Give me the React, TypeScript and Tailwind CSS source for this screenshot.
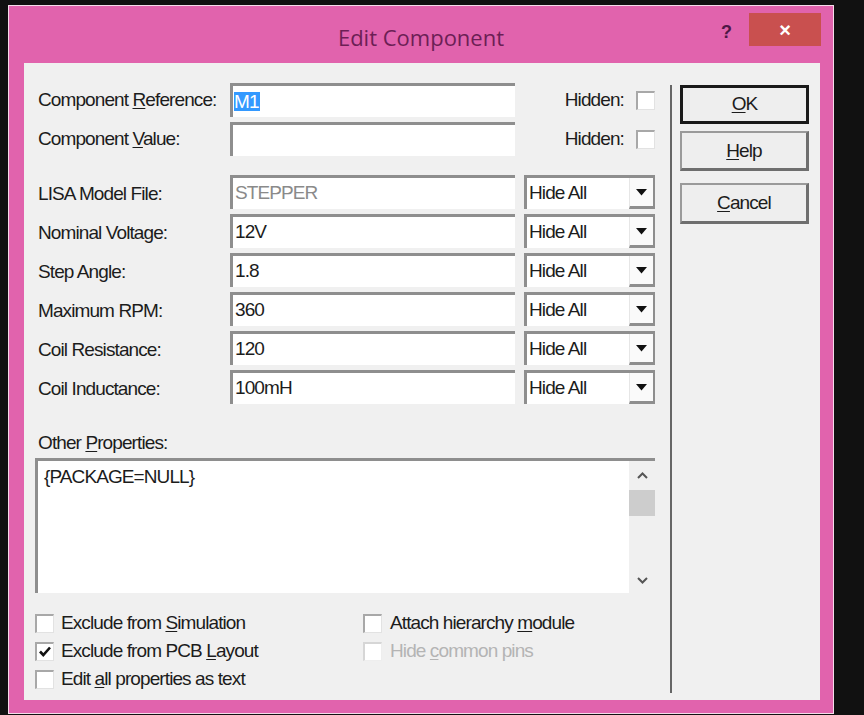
import React from "react";

const ui = "font-['Liberation_Sans',Arial,sans-serif] text-[19px] tracking-[-0.9px] text-[#1c1c1c]";

// sunken white field used for inputs
function Field({ value, gray, selected }: { value?: string; gray?: boolean; selected?: boolean }) {
  return (
    <div className="w-[285px] h-[34px] shrink-0 flex items-center bg-white border-t-[3px] border-l-[3px] border-[#8e8e8e]">
      {selected ? (
        <span className="ml-[1px] bg-[#3399ff] text-white leading-[19px] pr-[1px]">{value}</span>
      ) : (
        <span className={"ml-[2px] " + (gray ? "text-[#8a8a8a]" : "")}>{value}</span>
      )}
    </div>
  );
}

function Dropdown() {
  return (
    <div className="ml-[9px] w-[131px] h-[34px] flex bg-white border-t-[3px] border-l-[3px] border-[#8e8e8e]">
      <span className="flex-1 flex items-center pl-[2px]">Hide All</span>
      <div className="w-[26px] flex items-center justify-center bg-[#fafafa] border-l border-[#e6e6e6] border-r-[2px] border-r-[#8e8e8e] border-b-[3px] border-b-[#8e8e8e]">
        <svg width="11" height="7" viewBox="0 0 11 7">
          <path d="M0 0 H11 L5.5 6.5 Z" fill="#111" />
        </svg>
      </div>
    </div>
  );
}

function Check({ checked, disabled }: { checked?: boolean; disabled?: boolean }) {
  return (
    <div
      className={
        "w-[19px] h-[19px] shrink-0 flex items-center justify-center bg-white border-t-[2px] border-l-[2px] border-r border-b " +
        (disabled
          ? "border-t-[#d6d6d6] border-l-[#d6d6d6] border-r-[#eeeeee] border-b-[#eeeeee] bg-[#f6f6f6]"
          : "border-t-[#a8a8a8] border-l-[#a8a8a8] border-r-[#e2e2e2] border-b-[#e2e2e2]")
      }
    >
      {checked && (
        <svg width="12" height="11" viewBox="0 0 12 11">
          <path d="M1 5.5 L4.3 9 L11 1.5" stroke="#111" strokeWidth="2.6" fill="none" />
        </svg>
      )}
    </div>
  );
}

const rows = [
  ["LISA Model File:", "STEPPER"],
  ["Nominal Voltage:", "12V"],
  ["Step Angle:", "1.8"],
  ["Maximum RPM:", "360"],
  ["Coil Resistance:", "120"],
  ["Coil Inductance:", "100mH"],
];

export default function App() {
  return (
    <div className={"w-[864px] h-[715px] bg-[#111111] pt-[5px] pl-[8px] overflow-hidden " + ui}>
      <div className="w-[826px] h-[709px] border border-[#f6dcea] bg-[#e163ad] flex flex-col">
        {/* title bar */}
        <div className="h-[57px] shrink-0 grid grid-cols-[1fr_auto_1fr]">
          <div />
          <div className="pt-[16px] font-['Open_Sans',sans-serif] text-[22px] tracking-normal text-[#6c1f55] leading-[30px]">
            Edit Component
          </div>
          <div className="flex justify-end items-start pr-[12px] pt-[7px]">
            <span className="mt-[6px] mr-[17px] font-['Liberation_Sans',Arial,sans-serif] font-bold text-[18px] text-[#4f1846] tracking-normal">
              ?
            </span>
            <div className="w-[72px] h-[33px] bg-[#c9504f] flex items-center justify-center text-white font-bold text-[20px] tracking-normal">
              ×
            </div>
          </div>
        </div>

        {/* client area */}
        <div className="ml-[15px] w-[796px] h-[637px] bg-[#f0f0f0] flex">
          <div className="ml-[11px] w-[620px] pt-[20px] flex flex-col">
            <div className="h-[34px] flex items-center">
              <span className="w-[195px] pl-[3px] shrink-0">
                Component <u className="underline-offset-2">R</u>eference:
              </span>
              <Field value="M1" selected />
              <div className="flex-1 flex justify-end items-center gap-[12px]">
                <span>Hidden:</span>
                <Check />
              </div>
            </div>
            <div className="h-[34px] mt-[5px] flex items-center">
              <span className="w-[195px] pl-[3px] shrink-0">
                Component <u className="underline-offset-2">V</u>alue:
              </span>
              <Field />
              <div className="flex-1 flex justify-end items-center gap-[12px]">
                <span>Hidden:</span>
                <Check />
              </div>
            </div>

            <div className="mt-[19px] flex flex-col gap-[5px]">
              {rows.map(([label, value], i) => (
                <div key={label} className="h-[34px] flex items-center">
                  <span className="w-[195px] pl-[3px] pt-[4px] shrink-0">{label}</span>
                  <Field value={value} gray={i === 0} />
                  <Dropdown />
                </div>
              ))}
            </div>

            <span className="mt-[28px] pl-[3px] leading-[22px]">
              Other <u className="underline-offset-2">P</u>roperties:
            </span>
            <div className="mt-[4px] h-[135px] flex bg-white border-t-[3px] border-l-[3px] border-[#8e8e8e]">
              <div className="flex-1 pl-[6px] pt-[5px] leading-[22px]">{"{PACKAGE=NULL}"}</div>
              <div className="w-[26px] bg-[#f0f0f0] flex flex-col">
                <div className="h-[29px] flex items-center justify-center">
                  <svg width="11" height="7" viewBox="0 0 11 7">
                    <path d="M1 6 L5.5 1.5 L10 6" stroke="#555" strokeWidth="2" fill="none" />
                  </svg>
                </div>
                <div className="h-[26px] bg-[#cdcdcd]" />
                <div className="flex-1" />
                <div className="h-[26px] flex items-center justify-center">
                  <svg width="11" height="7" viewBox="0 0 11 7">
                    <path d="M1 1 L5.5 5.5 L10 1" stroke="#555" strokeWidth="2" fill="none" />
                  </svg>
                </div>
              </div>
            </div>

            <div className="mt-[16px] grid grid-cols-[328px_1fr]">
              <div className="flex flex-col">
                <div className="h-[28px] flex items-center gap-[7px]">
                  <Check />
                  <span>
                    Exclude from <u className="underline-offset-2">S</u>imulation
                  </span>
                </div>
                <div className="h-[28px] flex items-center gap-[7px]">
                  <Check checked />
                  <span>
                    Exclude from PCB <u className="underline-offset-2">L</u>ayout
                  </span>
                </div>
                <div className="h-[28px] flex items-center gap-[7px]">
                  <Check />
                  <span>
                    Edit <u className="underline-offset-2">a</u>ll properties as text
                  </span>
                </div>
              </div>
              <div className="flex flex-col">
                <div className="h-[28px] flex items-center gap-[8px]">
                  <Check />
                  <span>
                    Attach hierarchy <u className="underline-offset-2">m</u>odule
                  </span>
                </div>
                <div className="h-[28px] flex items-center gap-[8px]">
                  <Check disabled />
                  <span className="text-[#b4b4b4]">
                    Hide <u className="underline-offset-2">c</u>ommon pins
                  </span>
                </div>
              </div>
            </div>
          </div>

          {/* separator */}
          <div className="ml-[15px] mt-[22px] w-[2px] h-[608px] bg-[#666666]" />

          {/* buttons */}
          <div className="ml-[8px] mt-[22px] w-[129px] flex flex-col">
            <div className="h-[39px] border-[3px] border-[#1a1a1a] bg-[#eeeeee] flex items-center justify-center">
              <span>
                <u className="underline-offset-2">O</u>K
              </span>
            </div>
            <div className="mt-[7px] h-[40px] border-2 border-[#9a9a9a] border-r-[3px] border-b-[3px] border-r-[#6e6e6e] border-b-[#6e6e6e] bg-[#eeeeee] flex items-center justify-center">
              <span className="pt-[2px]">
                <u className="underline-offset-2">H</u>elp
              </span>
            </div>
            <div className="mt-[12px] h-[41px] border-2 border-[#9a9a9a] border-r-[3px] border-b-[3px] border-r-[#6e6e6e] border-b-[#6e6e6e] bg-[#eeeeee] flex items-center justify-center">
              <span>
                <u className="underline-offset-2">C</u>ancel
              </span>
            </div>
          </div>
        </div>
      </div>
    </div>
  );
}
